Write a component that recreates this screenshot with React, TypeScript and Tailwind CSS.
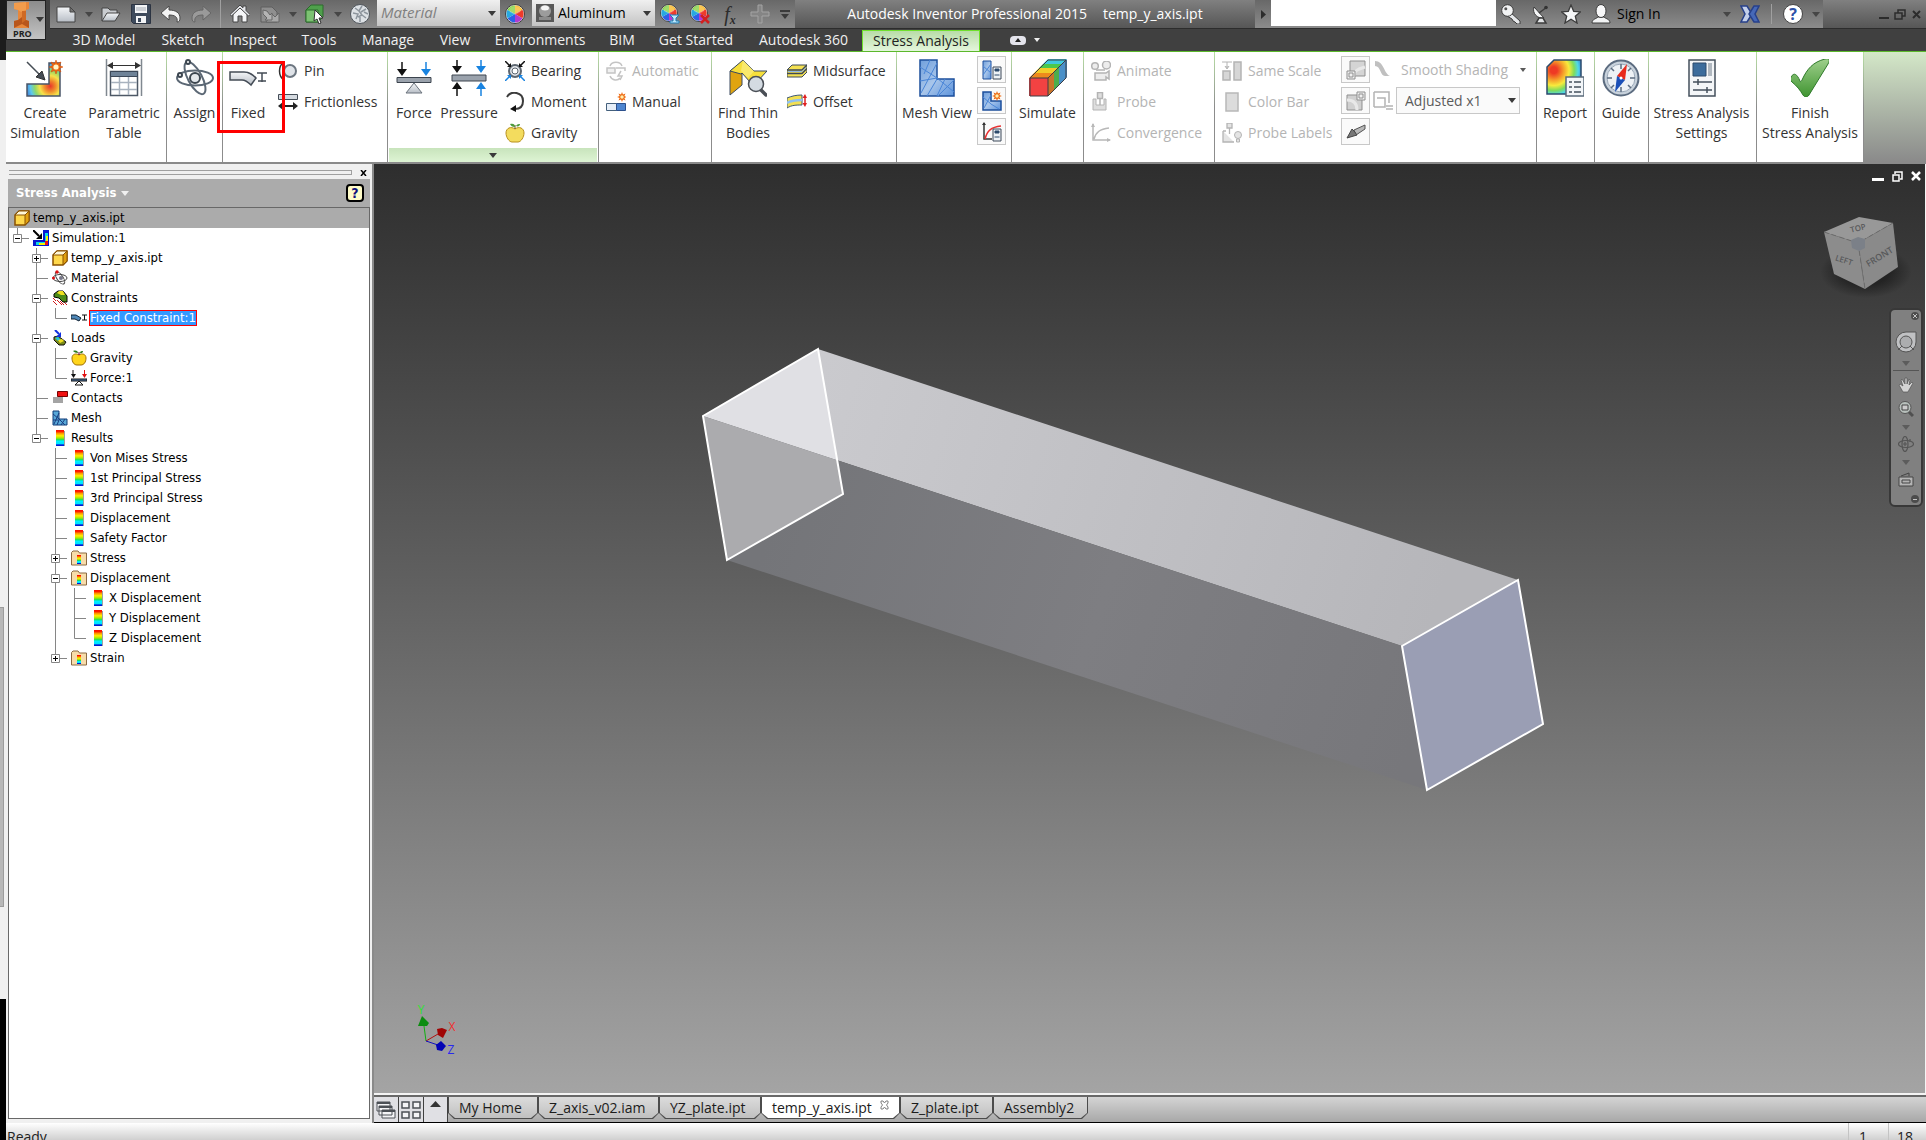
import type { ReactNode } from "react";

type IconProps = { children: ReactNode; size?: "sm" | "lg" | "xs" };

function Icon({ children, size = "sm" }: IconProps) {
  if (size === "lg") {
    return (
      <svg viewBox="0 0 38 38" className="size-[38px] shrink-0" fill="none">
        {children}
      </svg>
    );
  }
  if (size === "xs") {
    return (
      <svg viewBox="0 0 16 16" className="size-4 shrink-0" fill="none">
        {children}
      </svg>
    );
  }
  return (
    <svg viewBox="0 0 20 20" className="size-5 shrink-0" fill="none">
      {children}
    </svg>
  );
}

function Defs() {
  return (
    <svg className="absolute size-0" aria-hidden="true">
      <defs>
        <radialGradient id="heat" cx="0.7" cy="0.7" r="0.75">
          <stop offset="0" stopColor="#e8352a" />
          <stop offset="0.22" stopColor="#f08a2c" />
          <stop offset="0.42" stopColor="#f7e14a" />
          <stop offset="0.62" stopColor="#8fd86a" />
          <stop offset="0.8" stopColor="#5cc8ee" />
          <stop offset="1" stopColor="#3f78d8" />
        </radialGradient>
        <radialGradient id="heat2" cx="0.2" cy="0.3" r="1">
          <stop offset="0.1" stopColor="#ee3a24" />
          <stop offset="0.28" stopColor="#f59a2a" />
          <stop offset="0.45" stopColor="#f8ea3c" />
          <stop offset="0.6" stopColor="#7fdc5c" />
          <stop offset="0.72" stopColor="#4fd8e8" />
          <stop offset="0.9" stopColor="#2b5fd0" />
        </radialGradient>
        <linearGradient id="rainbow" x1="0" y1="0" x2="0" y2="1">
          <stop offset="0.08" stopColor="#ff1000" />
          <stop offset="0.22" stopColor="#ff9a00" />
          <stop offset="0.36" stopColor="#fff000" />
          <stop offset="0.5" stopColor="#a8e800" />
          <stop offset="0.62" stopColor="#10e060" />
          <stop offset="0.68" stopColor="#00f0ff" />
          <stop offset="0.88" stopColor="#00e0ff" />
          <stop offset="0.92" stopColor="#0018d8" />
        </linearGradient>
        <linearGradient id="steel" x1="0" y1="0" x2="0" y2="1">
          <stop offset="0" stopColor="#f4f6f8" />
          <stop offset="1" stopColor="#b8bec6" />
        </linearGradient>
        <linearGradient id="blue" x1="0" y1="0" x2="1" y2="1">
          <stop offset="0" stopColor="#6f9fdc" />
          <stop offset="0.5" stopColor="#a9c6ea" />
          <stop offset="1" stopColor="#5c93dc" />
        </linearGradient>
        <linearGradient id="tick" x1="0" y1="0" x2="0" y2="1">
          <stop offset="0" stopColor="#9fd08c" />
          <stop offset="1" stopColor="#3f9430" />
        </linearGradient>
      </defs>
    </svg>
  );
}

const burst = "M0-7 1.4-3.4 5-5 3.4-1.4 7 0 3.4 1.4 5 5 1.4 3.4 0 7-1.4 3.4-5 5-3.4 1.4-7 0-3.4-1.4-5-5-1.4-3.4Z";

/* ---------- quick access icons ---------- */

const wheel = (
  <>
    <circle cx="10" cy="10" r="9.5" fill="#f5f5f5" stroke="#3c3c3c" />
    <path d="M10 10V1.500A8.500 8.500 0 0 1 17.400 5.800Z" fill="#f7b51e" />
    <path d="M10 10 17.400 5.800A8.500 8.500 0 0 1 17.400 14.200Z" fill="#ee3b2a" />
    <path d="M10 10 17.400 14.200A8.500 8.500 0 0 1 10 18.500Z" fill="#b23bd0" />
    <path d="M10 10V18.500A8.500 8.500 0 0 1 2.600 14.200Z" fill="#2c62e8" />
    <path d="M10 10 2.600 14.200A8.500 8.500 0 0 1 2.600 5.800Z" fill="#27a8e0" />
    <path d="M10 10 2.600 5.800A8.500 8.500 0 0 1 10 1.500Z" fill="#7ed03a" />
    <ellipse cx="10" cy="6" rx="6" ry="4" fill="#fff" opacity="0.25" />
  </>
);

const icons = {
  doc: <path d="M1 3h13l5 5v10H1Zm13 0v5h5" fill="url(#steel)" stroke="#444" />,
  open: (
    <>
      <path d="M1 17V4h6l2 2h7v3" fill="#c9ccd0" stroke="#444" />
      <path d="M1 17 6 9h13l-5 8Z" fill="url(#steel)" stroke="#444" />
    </>
  ),
  save: (
    <>
      <path d="M.5.500h19v19H2.500l-2-2Z" fill="#3d4a5c" stroke="#2c3442" />
      <path d="M4 1h12v8H4ZM5 12h10v7H5Z" fill="#f2f4f6" />
      <path d="M5 4h10M5 6h10" stroke="#a5acb5" />
      <path d="M7 14h3v4H7Z" fill="#3d4a5c" />
    </>
  ),
  undo: <path d="M0 9 8 2v4c7 0 11 3 11 8 0 3-1 4-3 4 1-5-2-7-8-7v5Z" fill="#f4f4f4" stroke="#4a4a4a" />,
  redo: <path d="M20 9 12 2v4C5 6 1 9 1 14c0 3 1 4 3 4-1-5 2-7 8-7v5Z" fill="#9a9a9a" stroke="#666" />,
  home: (
    <>
      <path d="M3 10v8h5v-6h4v6h5v-8l-7-7Z" fill="#f4f5f7" stroke="#444" />
      <path d="M0 10.500 10 1l3 2.800V2h3v4.500l4 4-1.500 1.500L10 4 1.500 12Z" fill="#e4e6ea" stroke="#444" />
    </>
  ),
  update: (
    <>
      <path d="M1 3h11l5 5v10H1Z" fill="#8f8f8f" stroke="#5f5f5f" />
      <path d="M19 18H6l6-8 3 3 4-4Z" fill="#a8a8a8" stroke="#666" />
      <path d="m3 6 4 1 3 4 2-2v7H5l2-2-4-4Z" fill="#b4b4b4" stroke="#666" />
    </>
  ),
  select: (
    <>
      <path d="M1 6 6 1h12v12l-5 5H1Z" fill="#4fa04c" stroke="#2c6a2c" />
      <path d="M1 6h12v12H1Z" fill="#7cc272" stroke="#2c6a2c" />
      <path d="m10 6 8 8h-4l2 5-2 1-2-5-3 2Z" fill="#fff" stroke="#333" />
    </>
  ),
  ball: (
    <>
      <circle cx="10" cy="10" r="9.500" fill="#dde1e5" stroke="#50565c" />
      <path d="m5 4 4 3 3-5M3 9l5 1-2 5M11 8l5-3M12 11l4 3M10 13v5M9 7l3 4-4 2M14 8l4 2" stroke="#8d959d" strokeWidth="1.500" />
    </>
  ),
  wheel,
  adjust: (
    <>
      <g transform="scale(.9)">{wheel}</g>
      <path d="M10 11h9l-3 3v3h3v2h-9v-2h3v-3Z" fill="#bfe8fb" stroke="#1c7fb8" />
    </>
  ),
  clear: (
    <>
      <g transform="scale(.9)">{wheel}</g>
      <path d="m11 11 8 8m0-8-8 8" stroke="#d22020" strokeWidth="2.500" />
    </>
  ),
  plus: <path d="M8 1h4v7h7v4h-7v7H8v-7H1V8h7Z" fill="#858585" stroke="#a4a4a4" />,
  key: (
    <>
      <path d="m9 8 10 9v3h-3l-2-2-2-1-1-2-5-3Z" fill="#e6e8ea" stroke="#3c3c3c" />
      <circle cx="6.500" cy="6.500" r="5.800" fill="#f2f3f4" stroke="#3c3c3c" />
      <circle cx="4.800" cy="4.800" r="1.500" fill="#555" />
    </>
  ),
  dish: (
    <>
      <path d="M3 3c-2 6 3 12 10 11Z" fill="#f4f5f6" stroke="#3c3c3c" />
      <path d="m8 9 8-6M5 19h10l-3-5H8Z" fill="#e2e4e6" stroke="#3c3c3c" strokeWidth="1.500" />
      <circle cx="15" cy="3.500" r="1.800" fill="#333" />
    </>
  ),
  star: <path d="m10 1 2.700 6.300 6.800.5-5.200 4.400 1.700 6.800-6-3.700L4 19l1.700-6.800L.5 7.800l6.800-.5Z" fill="#f6f7f8" stroke="#3c3c3c" strokeWidth="1.300" />,
  user: (
    <>
      <path d="M1 19c0-4 4-4 6-6h6c2 2 6 2 6 6Z" fill="#f2f3f4" stroke="#3c3c3c" />
      <ellipse cx="10" cy="7" rx="5" ry="6.500" fill="#f8f8f9" stroke="#3c3c3c" />
    </>
  ),
  exchange: (
    <>
      <path d="M1 2h6l5 8-5 8H1l4-8Z" fill="#c4d0ea" stroke="#27408a" strokeWidth="1.500" />
      <path d="M19 2h-5l-5 8 5 8h5l-4-8Z" fill="#4668b8" stroke="#27408a" strokeWidth="1.500" />
    </>
  ),
};

const big = {
  createSim: (
    <>
      <path d="M1 25h22V4h11v33H1Z" fill="url(#heat)" stroke="#4a5668" strokeWidth="1.500" />
      <path d="M1 3 16 18" stroke="#454c54" strokeWidth="1.500" />
      <path d="M19 21 10 18l6-6Z" fill="#454c54" stroke="#333" />
      <g transform="translate(30 8)">
        <path d={burst} fill="#ee6b12" stroke="#d04808" strokeWidth=".5" />
        <circle r="2.600" fill="#fff6c8" />
      </g>
    </>
  ),
  table: (
    <>
      <path d="M1.500 0v37M36.500 0v37" stroke="#808890" strokeWidth="1.500" />
      <path d="M3 6.500h32" stroke="#333" />
      <path d="M2 6.500 8 3v7ZM36 6.500 30 3v7Z" fill="#333" />
      <path d="M5.500 12.500h27v24h-27Z" fill="#fff" stroke="#4d5866" strokeWidth="1.500" />
      <path d="M5.500 12.500h27v5h-27Z" fill="#6f8398" stroke="#3c4858" />
      <path d="M6 23.500h26M6 30.500h26M14.500 18v18M23.500 18v18" stroke="#a8b2be" strokeWidth="1.500" />
    </>
  ),
  assign: (
    <g stroke="#5c6875" strokeWidth="2">
      <ellipse cx="19" cy="19" rx="18" ry="7.500" />
      <ellipse cx="19" cy="19" rx="18" ry="7" transform="rotate(62 19 19)" />
      <circle cx="19" cy="19" r="5" fill="#e4e8ec" stroke="#3c4650" />
      <circle cx="12" cy="3" r="2" fill="#fff" stroke="#3c4650" />
      <circle cx="4" cy="16" r="2" fill="#fff" stroke="#3c4650" />
    </g>
  ),
  fixed: (
    <>
      <path d="M1 13h14c6 0 9 3 12 6l-5 7c-3-3-5-5-9-5H1Z" fill="url(#steel)" stroke="#444c56" strokeWidth="1.500" />
      <path d="M28 14h10M33 14v9M29 22h8" stroke="#444c56" strokeWidth="1.500" />
    </>
  ),
  force: (
    <>
      <path d="M2 18.500h34v5H2Z" fill="#9aa2ac" stroke="#3c444e" />
      <path d="m19 24 8 10H11Z" fill="url(#steel)" stroke="#6a727c" />
      <path d="M7 3v10" stroke="#111" strokeWidth="1.500" />
      <path d="M2 10h10l-5 7Z" fill="#111" />
      <path d="M31 3v10" stroke="#1883e0" strokeWidth="1.500" />
      <path d="M26 10h10l-5 7Z" fill="#1883e0" />
    </>
  ),
  pressure: (
    <>
      <path d="M2 16h34v6H2Z" fill="#9aa2ac" stroke="#3c444e" />
      <path d="M7 1v8M7 29v8" stroke="#111" strokeWidth="1.500" />
      <path d="M2 7h10l-5 7ZM2 30h10l-5-7Z" fill="#111" />
      <path d="M31 1v8M31 29v8" stroke="#1883e0" strokeWidth="1.500" />
      <path d="M26 7h10l-5 7ZM26 30h10l-5-7Z" fill="#1883e0" />
    </>
  ),
  thin: (
    <>
      <path d="M1 12 13 3v23L1 36Z" fill="#e0a410" stroke="#3a4a60" />
      <path d="M1 12 14 1l11 11h13L27 24l-6-1-8-9-1 1Z" fill="#f6df3c" stroke="#3a4a60" />
      <path d="m14 1 11 11-6 7-7-7Z" fill="#fbf08c" opacity=".6" />
      <path d="m31 30 6 6" stroke="#4a4f56" strokeWidth="3.500" strokeLinecap="round" />
      <circle cx="27" cy="25" r="7.500" fill="#d4dbe2" stroke="#4a4f56" strokeWidth="1.500" />
    </>
  ),
  mesh: (
    <>
      <path d="M2 1h17v19h17v17H2Z" fill="url(#blue)" stroke="#1c4f9c" strokeWidth="1.500" />
      <path d="m2 8 17 11M19 4 3 34M2 22l17-3 17 14M19 20 9 37M19 37l8-17M36 21 20 37M12 1l-6 14" stroke="#4a86d8" />
    </>
  ),
  simulate: (
    <>
      <path d="M0 19 5 14h19l-5 5Z" fill="#ee8a1c" />
      <path d="M5 14 10 9h19l-5 5Z" fill="#f2cc28" />
      <path d="M10 9 14 5h19l-4 4Z" fill="#4cc84c" />
      <path d="M14 5 19 0h19l-5 5Z" fill="#40c8e0" />
      <path d="M0 19h19v18H0Z" fill="#f24242" />
      <path d="m19 19 6-6v18l-6 6Z" fill="#c8742a" />
      <path d="m25 13 5-5v18l-5 5Z" fill="#4cae4c" />
      <path d="m30 8 8-8v18l-8 8Z" fill="#4a90c8" />
      <path d="M1 19 19 1h18v18L19 37H1ZM1 19h18v18M19 19 37 1" stroke="#3c3c44" />
    </>
  ),
  report: (
    <>
      <path d="M1 8 8 1h27v34H1Z" fill="url(#heat2)" stroke="#2c4a6c" strokeWidth="1.500" />
      <path d="M20 18h18v19H20Z" fill="#f2f5f8" stroke="#5a6a7a" strokeWidth="1.500" />
      <path d="M23 23h3M23 28h3M23 33h3M28 23h7M28 28h7M28 33h7" stroke="#44505c" strokeWidth="1.500" />
    </>
  ),
  guide: (
    <>
      <circle cx="19" cy="19" r="17.500" fill="#c8d2dc" stroke="#5c6c80" strokeWidth="2" />
      <circle cx="19" cy="19" r="14" fill="#eef2f6" stroke="#9aa8b8" />
      <path d="M19 5v5M19 28v5M5 19h5M28 19h5M9 9l3 3M26 26l3 3M9 29l3-3M26 12l3-3" stroke="#5c6c80" strokeWidth="1.500" />
      <path d="m25 5-2 16-8-4Z" fill="#e82a1c" />
      <path d="m13 33 2-16 8 4Z" fill="#1c50b8" />
      <circle cx="19" cy="19" r="1.500" fill="#fff" />
    </>
  ),
  settings: (
    <>
      <path d="M6 1h26v36H6Z" fill="#f4f6f8" stroke="#44505c" strokeWidth="1.500" />
      <path d="M10 4h13v13H10Z" fill="#3c6c9c" stroke="#2c4a6c" />
      <path d="M25 4h4v13h-4Z" fill="#b0b8c0" />
      <path d="M10 23h19M10 31h19M15 20v6M24 28v6" stroke="#44505c" strokeWidth="1.500" />
    </>
  ),
  finish: <path d="M0 18c3-5 6-3 9 4 0 1 1 1 2-1C16 10 22 3 34 0c5-1 5 1 3 5L18 36c-2 3-4 3-6 0C9 31 6 27 1 23c-2-2-2-3-1-5Z" fill="url(#tick)" stroke="#2f7a2a" />,
};

const small = {
  pin: (
    <>
      <path d="M6 1C0 5 0 15 6 19" stroke="#333" strokeWidth="1.500" />
      <path d="M2 0h4v4" stroke="#333" strokeWidth="2" />
      <circle cx="12" cy="10" r="6" fill="#dfe3e8" stroke="#6c7680" strokeWidth="2" />
    </>
  ),
  frictionless: (
    <>
      <path d="M.5 2.500h19v5H.5Z" fill="#d5dae0" stroke="#444c56" />
      <path d="M4 14h12" stroke="#222" strokeWidth="2" />
      <path d="m0 14 5-4v8ZM20 14l-5-4v8Z" fill="#222" />
    </>
  ),
  bearing: (
    <>
      <circle cx="10" cy="10" r="6" fill="#dfe3e8" stroke="#5c6670" strokeWidth="2" />
      <circle cx="10" cy="10" r="3" fill="#fff" stroke="#5c6670" />
      <path d="m0 0 5 5M20 0l-5 5" stroke="#111" strokeWidth="1.500" />
      <path d="M6 6H2l4-4ZM14 6h4l-4-4Z" fill="#111" />
      <path d="m0 20 5-5M20 20l-5-5" stroke="#1883e0" strokeWidth="1.500" />
      <path d="M6 14H2l4 4ZM14 14h4l-4 4Z" fill="#1883e0" />
    </>
  ),
  moment: (
    <>
      <path d="M2 5C6-2 18 0 18 9c0 5-3 8-8 8" stroke="#3c3c3c" strokeWidth="2" />
      <path d="m5 17 6-4v7Z" fill="#111" />
    </>
  ),
  apple: (
    <>
      <path d="M10 6c4-3 9-1 9 4 0 4-3 9-6 9-2 0-4 0-6 0-3 0-6-5-6-9 0-5 5-7 9-4Z" fill="#f3dc5e" stroke="#b8901c" />
      <path d="M10 6V2" stroke="#6a5020" />
      <path d="M10 4c-3 0-4-1-5-3 3-1 5 0 5 3ZM11 3c1-2 3-2 4-2 0 2-2 3-4 2Z" fill="#4e9a3c" />
    </>
  ),
  auto: (
    <g stroke="#c4c4c4" strokeWidth="1.500">
      <path d="M4 5c2-5 10-5 12 0M4 15c2 5 8 5 10 2" />
      <path d="M1 7h8v5H1Z" fill="#f0f0f0" />
      <path d="M10 7h9v3M15 10l-3 5h4l-2 4" />
    </g>
  ),
  manual: (
    <>
      <path d="M.5 11.500h10v7H.5Z" fill="#e6eef8" stroke="#44607c" />
      <path d="M10.500 11.500h9v7h-9Z" fill="#4f86d0" stroke="#2c508c" />
      <g transform="translate(16 5) scale(.7)">
        <path d={burst} fill="#ee6b12" />
        <circle r="2.500" fill="#fff0b0" />
      </g>
    </>
  ),
  midsurface: (
    <>
      <path d="M0 9 5 4h15v7l-5 5H0Z" fill="#f3e052" stroke="#3c4858" />
      <path d="M0 9h15l5-5M0 12.500h15l5-5" stroke="#3c4858" strokeWidth="1.500" />
      <path d="M1 10.500h14l4-4" stroke="#8fb8e8" />
    </>
  ),
  offset: (
    <>
      <path d="M0 6c5-2 9-3 15-3v10c-6 0-10 0-15 3Z" fill="#f3e052" stroke="#3c5878" />
      <path d="M0 11c5-3 9-3 15-3" stroke="#8fc0f0" strokeWidth="2.500" />
      <path d="M18 4v9" stroke="#e02020" strokeWidth="1.500" />
      <path d="m15.500 6 2.500-4 2 4ZM15.500 11l2.500 4 2-4Z" fill="#e02020" />
    </>
  ),
  meshSettings: (
    <>
      <path d="M1 1h8v18H1Z" fill="url(#blue)" stroke="#1c4f9c" />
      <path d="m1 6 8 7M9 4 1 15" stroke="#4a86d8" />
      <path d="M11 7h8v12h-8Z" fill="#eef2f6" stroke="#3c4858" />
      <path d="M13 9h4v2h-4ZM12.500 15h5" fill="#2c4a6c" stroke="#2c4a6c" />
    </>
  ),
  meshLocal: (
    <>
      <path d="M1 1h8v9h10v9H1Z" fill="url(#blue)" stroke="#1c4f9c" strokeWidth="1.500" />
      <path d="m1 6 8 7 8 5M9 4 2 17" stroke="#4a86d8" />
      <g transform="translate(15 5) scale(.7)">
        <path d={burst} fill="#ee6b12" />
        <circle r="2.500" fill="#fff0b0" />
      </g>
    </>
  ),
  convSettings: (
    <>
      <path d="M2 1v16h8" stroke="#333" strokeWidth="1.500" />
      <path d="m0 3 2-3 2 3Z" fill="#333" />
      <path d="M3 17C5 9 9 5 19 4" stroke="#e83030" strokeWidth="1.500" />
      <path d="M11 7h8v12h-8Z" fill="#eef2f6" stroke="#3c4858" />
      <path d="M13 9h4v2h-4ZM12.500 15h5" fill="#2c4a6c" stroke="#2c4a6c" />
    </>
  ),
  animate: (
    <g stroke="#b4b4b4" strokeWidth="1.500" fill="#ededed">
      <circle cx="4" cy="5" r="3.300" />
      <circle cx="15.500" cy="4" r="4" />
      <path d="M5 9h9M4 12h11l3-2v8l-3-2v3H4Z" />
    </g>
  ),
  probe: (
    <g stroke="#b4b4b4" fill="#dedede">
      <path d="M2 7h3v6h8V7h2v11H2Z" />
      <path d="M6.500.500h5v6h-5ZM9 7v6" strokeWidth="1.500" />
    </g>
  ),
  convergence: (
    <>
      <path d="M2 1v16h17M3 16C5 9 9 6 18 5" stroke="#b8b8b8" strokeWidth="1.500" />
      <path d="m0 4 2-4 2 4ZM16 15l4 2-4 2Z" fill="#b8b8b8" />
    </>
  ),
  sameScale: (
    <g stroke="#b4b4b4" fill="#d6d6d6">
      <path d="M0 1h10M5 1v6M3 5l2 3 2-3" />
      <path d="M1 10h7v9H1ZM12 1h7v18h-7Z" strokeWidth="1.500" />
    </g>
  ),
  colorBar: <path d="M4 1h12v18H4Z" fill="#dcdcdc" stroke="#b8b8b8" strokeWidth="1.500" />,
  probeLabels: (
    <g stroke="#b4b4b4" fill="#e4e4e4">
      <path d="M5 0h5v5H5ZM7.500 5v6M1 8h3M1 8v11h11" strokeWidth="1.300" />
      <circle cx="16" cy="12" r="3.500" />
      <path d="M14.500 16h3v3h-3Z" />
    </g>
  ),
  maxValue: (
    <g stroke="#8f8f8f">
      <path d="M4 1h15v15H4Z" fill="#d4d4d4" />
      <path d="M8 16c0-6 5-7 11-9" stroke="#e8e8e8" strokeWidth="3" />
      <path d="M1 11h8v8H1ZM3 13h4v4H3Z" fill="#f0f0f0" />
    </g>
  ),
  minValue: (
    <g stroke="#8f8f8f">
      <path d="M1 4h15v15H1Z" fill="#d0d0d0" />
      <path d="M1 9c7 0 10 4 10 10" stroke="#e8e8e8" strokeWidth="3" />
      <path d="M11 1h8v8h-8ZM13 3h4v4h-4Z" fill="#f0f0f0" />
    </g>
  ),
  boundary: (
    <>
      <path d="m8 8 11-5v4l-9 6Z" fill="#b8b8b8" stroke="#555" />
      <path d="M1 16 6 7l2 2 3 4Z" fill="#777" stroke="#444" />
    </>
  ),
  shading: <path d="M2 1c9 0 9 13 15 15h-5C7 16 8 6 2 6Z" fill="#c0c0c0" />,
  scale: (
    <g stroke="#b4b4b4" strokeWidth="1.500">
      <path d="M1 1h15v11M1 1v15M4 7h8v9H1" />
      <path d="M13 15h7M13 18h7" />
    </g>
  ),
};

/* ---------- ribbon ---------- */

function Caret({ light = false }: { light?: boolean }) {
  return (
    <svg viewBox="0 0 8 5" className="h-[5px] w-2 shrink-0">
      <path d="M0 0h8L4 5Z" fill={light ? "#f0f0f0" : "#3a3a3a"} />
    </svg>
  );
}

function QuickButton({ label, children }: { label: string; children: ReactNode }) {
  return (
    <button aria-label={label} className="flex h-full w-[30px] shrink-0 items-center justify-center">
      <Icon>{children}</Icon>
    </button>
  );
}

function CaretButton({ label }: { label: string }) {
  return (
    <button aria-label={label} className="flex h-full w-[15px] shrink-0 items-center justify-center opacity-80">
      <Caret />
    </button>
  );
}

function BigButton({ label, icon, width }: { label: string[]; icon: ReactNode; width: string }) {
  return (
    <button className={`flex shrink-0 flex-col items-center pt-[7px] ${width}`}>
      <Icon size="lg">{icon}</Icon>
      <span className="mt-1.5 flex flex-col text-center whitespace-nowrap">
        {label.map((line) => (
          <span key={line}>{line}</span>
        ))}
      </span>
    </button>
  );
}

function SmallButton({ label, icon, disabled }: { label: string; icon: ReactNode; disabled?: boolean }) {
  return (
    <button disabled={disabled} className="flex h-[31px] items-center gap-1.5 whitespace-nowrap disabled:text-[#b4b4b4]">
      <Icon>{icon}</Icon>
      {label}
    </button>
  );
}

function SquareButton({ label, icon }: { label: string; icon: ReactNode }) {
  return (
    <button aria-label={label} className="flex h-[27px] w-[29px] shrink-0 items-center justify-center border border-[#c8c8c8] bg-[#fafafa]">
      <Icon>{icon}</Icon>
    </button>
  );
}

function Panel({ width, children }: { width: string; children: ReactNode }) {
  return (
    <div className={`flex shrink-0 bg-white ${width}`}>
      <div className="relative flex min-w-0 flex-1">{children}</div>
      <span className="w-px bg-linear-to-b from-[#b8e0a4] to-[#8c8c8c] to-50%" />
    </div>
  );
}

const tabs = [
  { label: "3D Model", width: "w-[90px]" },
  { label: "Sketch", width: "w-[68px]" },
  { label: "Inspect", width: "w-[72px]" },
  { label: "Tools", width: "w-[60px]" },
  { label: "Manage", width: "w-[78px]" },
  { label: "View", width: "w-14" },
  { label: "Environments", width: "w-[114px]" },
  { label: "BIM", width: "w-[50px]" },
  { label: "Get Started", width: "w-[98px]" },
  { label: "Autodesk 360", width: "w-[117px]" },
];

function TitleBar() {
  return (
    <div className="flex h-7 items-stretch bg-linear-to-b from-[#686868] to-[#8c8c8c] text-sm">
      <div className="flex items-center pl-px">
        <QuickButton label="New">{icons.doc}</QuickButton>
        <CaretButton label="New options" />
        <QuickButton label="Open">{icons.open}</QuickButton>
        <QuickButton label="Save">{icons.save}</QuickButton>
        <QuickButton label="Undo">{icons.undo}</QuickButton>
        <QuickButton label="Redo">{icons.redo}</QuickButton>
        <span className="mx-1 h-full w-px bg-[#a0a0a0]" />
        <QuickButton label="Home">{icons.home}</QuickButton>
        <QuickButton label="Update">{icons.update}</QuickButton>
        <CaretButton label="Update options" />
        <QuickButton label="Select">{icons.select}</QuickButton>
        <CaretButton label="Select options" />
        <QuickButton label="Material browser">{icons.ball}</QuickButton>
        <label className="ml-0.5 flex h-[26px] w-[123px] items-center self-start bg-linear-to-b from-[#f0f0f0] to-[#c4c4c4] pr-1 pl-1">
          <select aria-label="Material" className="min-w-0 flex-1 appearance-none text-[15px] text-[#808080] italic">
            <option>Material</option>
          </select>
          <Caret />
        </label>
        <QuickButton label="Appearance browser">{icons.wheel}</QuickButton>
        <label className="ml-0.5 flex h-[26px] w-[123px] items-center gap-1 self-start bg-linear-to-b from-[#f0f0f0] to-[#c4c4c4] pr-1 pl-1">
          <svg viewBox="0 0 18 18" className="size-[18px] shrink-0">
            <path d="M0 0h18v18H0Z" fill="#585858" />
            <circle cx="9" cy="7" r="6" fill="#9c9c9c" />
            <ellipse cx="9" cy="4" rx="4" ry="2.500" fill="#f4f4f4" />
            <path d="M3 13h12v3H3Z" fill="#8c8c8c" />
          </svg>
          <select aria-label="Appearance" className="min-w-0 flex-1 appearance-none text-sm text-black">
            <option>Aluminum</option>
          </select>
          <Caret />
        </label>
        <QuickButton label="Adjust appearance">{icons.adjust}</QuickButton>
        <QuickButton label="Clear appearance">{icons.clear}</QuickButton>
        <button aria-label="Parameters" className="w-[30px] shrink-0 font-['Liberation_Serif',serif] text-xl leading-6 text-[#2c2c2c] italic">
          f<sub className="text-xs font-bold">x</sub>
        </button>
        <QuickButton label="Add">{icons.plus}</QuickButton>
        <button aria-label="Customize" className="flex w-5 flex-col items-center gap-0.5">
          <span className="h-0.5 w-2.5 bg-[#3a3a3a]" />
          <Caret />
        </button>
      </div>
      <h1 className="flex min-w-0 flex-1 items-center justify-center gap-4 bg-linear-to-b from-[#808080] to-[#565656] whitespace-nowrap text-white">
        <span>Autodesk Inventor Professional 2015</span>
        <span>temp_y_axis.ipt</span>
      </h1>
      <div className="flex items-center">
        <button aria-label="Collapse search" className="flex w-4 items-center justify-center">
          <svg viewBox="0 0 5 9" className="h-[9px] w-[5px]">
            <path d="M0 0v9l5-4.500Z" fill="#2c2c2c" />
          </svg>
        </button>
        <input aria-label="Search" className="h-[26px] w-[225px] self-start bg-white px-1" />
        <QuickButton label="Subscription">{icons.key}</QuickButton>
        <QuickButton label="Communication">{icons.dish}</QuickButton>
        <QuickButton label="Favorites">{icons.star}</QuickButton>
        <button className="flex w-[133px] items-center gap-1.5 pl-[5px] text-black">
          <Icon>{icons.user}</Icon>
          Sign In
        </button>
        <span className="flex w-4 items-center">
          <CaretButton label="Account" />
        </span>
        <QuickButton label="Exchange">{icons.exchange}</QuickButton>
        <span className="mx-1.5 h-5 w-px bg-[#a0a0a0]" />
        <button aria-label="Help" className="flex w-[30px] justify-center">
          <span className="flex size-5 items-center justify-center rounded-full border border-[#444] bg-white text-base leading-4 font-bold text-[#2c50a8]">?</span>
        </button>
        <CaretButton label="Help options" />
      </div>
      <div className="flex w-[103px] items-center justify-end bg-linear-to-b from-[#808080] to-[#565656] pr-0.5">
        <button aria-label="Minimize" className="flex w-4 justify-center pt-2">
          <span className="h-0.5 w-2.5 bg-[#2c2c2c]" />
        </button>
        <button aria-label="Restore" className="flex w-4 justify-center">
          <svg viewBox="0 0 12 11" className="h-[11px] w-3">
            <path d="M1 4h7v6H1ZM4 4V1h7v6H8" fill="none" stroke="#2c2c2c" strokeWidth="1.500" />
          </svg>
        </button>
        <button aria-label="Close" className="flex w-4 justify-center">
          <svg viewBox="0 0 9 9" className="size-[9px]">
            <path d="m1 1 7 7m0-7L1 8" stroke="#2c2c2c" strokeWidth="2" />
          </svg>
        </button>
      </div>
    </div>
  );
}

function Header() {
  return (
    <header className="flex h-[52px] shrink-0 border-b border-[#5cb82c] bg-[#404040]">
      <div className="flex w-11 shrink-0 flex-col">
        <button aria-label="Application menu" className="flex h-10 w-10 items-start gap-1 border border-[#222] bg-linear-to-b from-[#8c8c8c] to-[#c4c4c4] pl-1.5">
          <span className="flex flex-col items-center">
            <svg viewBox="0 0 18 28" className="h-7 w-[18px]">
              <path d="M1 2 16 1v7l-3 1v10l3 1v7H1v-7l4-1V9L1 8Z" fill="#e8873a" />
              <path d="M1 2v6l4 1 3 2 5-2V1Z" fill="#f29c4c" />
              <path d="m5 19 4-3 4 3 3 1v7l-7-4-8 4v-7Z" fill="#b8561c" />
              <path d="M9 10h4v9l-4 3Z" fill="#cf6a24" />
            </svg>
            <span className="text-[9px] leading-[10px] font-bold text-[#222]">PRO</span>
          </span>
          <span className="pt-4">
            <Caret />
          </span>
        </button>
      </div>
      <div className="flex min-w-0 flex-1 flex-col">
        <TitleBar />
        <nav className="flex flex-1 items-stretch border-t border-[#2c2c2c] pl-[9px] text-sm text-[#f0f0f0]">
          {tabs.map((tab) => (
            <button key={tab.label} className={`shrink-0 text-center whitespace-nowrap ${tab.width}`}>
              {tab.label}
            </button>
          ))}
          <button className="mt-px w-[118px] shrink-0 border border-b-0 border-[#6fe02c] bg-linear-to-b from-[#b8dca8] to-[#e4f6dc] text-[#222]">
            Stress Analysis
          </button>
          <button aria-label="Minimize ribbon" className="ml-[30px] flex items-center gap-2">
            <span className="flex h-[9px] w-4 items-center justify-center rounded-sm bg-[#e4e4ec]">
              <svg viewBox="0 0 6 4" className="h-1 w-1.5">
                <path d="M0 4h6L3 0Z" fill="#222" />
              </svg>
            </span>
            <svg viewBox="0 0 6 4" className="h-1 w-1.5">
              <path d="M0 0h6L3 4Z" fill="#f0f0f0" />
            </svg>
          </button>
        </nav>
      </div>
    </header>
  );
}

function Ribbon() {
  return (
    <section className="flex h-28 shrink-0 overflow-hidden border-b-2 border-[#8a8a8a] bg-linear-to-b from-[#d4e8c8] to-[#8a8a8a] text-sm leading-5 text-[#333]">
      <Panel width="w-[161px]">
        <BigButton width="w-[78px]" label={["Create", "Simulation"]} icon={big.createSim} />
        <BigButton width="w-20" label={["Parametric", "Table"]} icon={big.table} />
      </Panel>
      <Panel width="w-14">
        <BigButton width="w-full" label={["Assign"]} icon={big.assign} />
      </Panel>
      <Panel width="w-[165px]">
        <BigButton width="w-[50px]" label={["Fixed"]} icon={big.fixed} />
        <div className="flex flex-col pt-[3px] pl-[5px]">
          <SmallButton label="Pin" icon={small.pin} />
          <SmallButton label="Frictionless" icon={small.frictionless} />
        </div>
        <span className="pointer-events-none absolute top-[9px] -left-1.5 h-[72px] w-[68px] border-[3px] border-[#ff0000]" />
      </Panel>
      <Panel width="w-[211px]">
        <div className="flex flex-1 flex-col">
          <div className="flex h-24">
            <BigButton width="w-[52px]" label={["Force"]} icon={big.force} />
            <BigButton width="w-[58px]" label={["Pressure"]} icon={big.pressure} />
            <div className="flex flex-col pt-[3px] pl-[7px]">
              <SmallButton label="Bearing" icon={small.bearing} />
              <SmallButton label="Moment" icon={small.moment} />
              <SmallButton label="Gravity" icon={small.apple} />
            </div>
          </div>
          <button aria-label="More loads" className="mx-px flex flex-1 items-center justify-center bg-linear-to-b from-[#c8e4bc] to-[#def4d4]">
            <Caret />
          </button>
        </div>
      </Panel>
      <Panel width="w-[113px]">
        <div className="flex flex-col pt-[3px] pl-[7px]">
          <SmallButton label="Automatic" icon={small.auto} disabled />
          <SmallButton label="Manual" icon={small.manual} />
        </div>
      </Panel>
      <Panel width="w-[185px]">
        <BigButton width="w-[72px]" label={["Find Thin", "Bodies"]} icon={big.thin} />
        <div className="flex flex-col pt-[3px] pl-[3px]">
          <SmallButton label="Midsurface" icon={small.midsurface} />
          <SmallButton label="Offset" icon={small.offset} />
        </div>
      </Panel>
      <Panel width="w-[115px]">
        <BigButton width="w-20" label={["Mesh View"]} icon={big.mesh} />
        <div className="flex flex-col gap-1 pt-1">
          <SquareButton label="Mesh settings" icon={small.meshSettings} />
          <SquareButton label="Local mesh control" icon={small.meshLocal} />
          <SquareButton label="Convergence settings" icon={small.convSettings} />
        </div>
      </Panel>
      <Panel width="w-[72px]">
        <BigButton width="w-full" label={["Simulate"]} icon={big.simulate} />
      </Panel>
      <Panel width="w-[131px]">
        <div className="flex flex-col pt-[3px] pl-[7px]">
          <SmallButton label="Animate" icon={small.animate} disabled />
          <SmallButton label="Probe" icon={small.probe} disabled />
          <SmallButton label="Convergence" icon={small.convergence} disabled />
        </div>
      </Panel>
      <Panel width="w-[322px]">
        <div className="flex w-[126px] flex-col pt-[3px] pl-[7px]">
          <SmallButton label="Same Scale" icon={small.sameScale} disabled />
          <SmallButton label="Color Bar" icon={small.colorBar} disabled />
          <SmallButton label="Probe Labels" icon={small.probeLabels} disabled />
        </div>
        <div className="flex flex-col gap-1 pt-1">
          <div className="flex h-[27px] items-center gap-[3px]">
            <SquareButton label="Maximum value" icon={small.maxValue} />
            <button disabled className="flex items-center gap-2 whitespace-nowrap text-[#b4b4b4]">
              <Icon>{small.shading}</Icon>
              Smooth Shading
            </button>
            <button aria-label="Shading options" className="ml-1.5 flex w-3 justify-center">
              <svg viewBox="0 0 6 4" className="h-1 w-1.5">
                <path d="M0 0h6L3 4Z" fill="#5a5a5a" />
              </svg>
            </button>
          </div>
          <div className="flex h-[27px] items-center gap-[3px]">
            <SquareButton label="Minimum value" icon={small.minValue} />
            <Icon>{small.scale}</Icon>
            <label className="flex h-full w-[124px] items-center border border-[#c8c8c8] bg-[#fafafa] pr-[3px] pl-2">
              <select aria-label="Displacement scale" className="min-w-0 flex-1 appearance-none text-[#5a5a5a]">
                <option>Adjusted x1</option>
              </select>
              <Caret />
            </label>
          </div>
          <SquareButton label="Boundary condition" icon={small.boundary} />
        </div>
      </Panel>
      <Panel width="w-[58px]">
        <BigButton width="w-14" label={["Report"]} icon={big.report} />
      </Panel>
      <Panel width="w-[54px]">
        <BigButton width="w-[52px]" label={["Guide"]} icon={big.guide} />
      </Panel>
      <Panel width="w-[108px]">
        <BigButton width="w-[105px]" label={["Stress Analysis", "Settings"]} icon={big.settings} />
      </Panel>
      <Panel width="w-[107px]">
        <BigButton width="w-full" label={["Finish", "Stress Analysis"]} icon={big.finish} />
      </Panel>
    </section>
  );
}

/* ---------- browser tree ---------- */

type TreeNode = {
  label: string;
  icon: ReactNode;
  selected?: boolean;
  collapsed?: boolean;
  children?: TreeNode[];
};

const part = (
  <>
    <path d="M1 5 5 1h10v10l-4 4H1Z" fill="#ffd84c" stroke="#8a5200" strokeWidth="1.500" />
    <path d="M5 1h10l-4 4H1Z" fill="#fff8d8" stroke="#8a5200" />
    <path d="M11 5v10l4-4V1Z" fill="#e0a010" stroke="#8a5200" />
  </>
);

const bar = (
  <>
    <path d="M4 0h8v16H4Z" fill="url(#rainbow)" />
    <path d="M12.500 1v15" stroke="#a0a0a0" />
  </>
);

const folder = (
  <>
    <path d="M.5 2.500 2 1h5l1.500 2H15.500v12H.5Z" fill="#f7dcaa" stroke="#8a6a44" />
    <path d="M6 5h4v9H6Z" fill="url(#rainbow)" />
  </>
);

const simulation: TreeNode = {
  label: "Simulation:1",
  icon: (
    <>
      <path d="M0 16v-6h10V0h6v16Z" fill="#0818d0" />
      <path d="M3 15v-3h9V3h3v12Z" fill="#10d8e0" />
      <path d="M6 15v-2h7V6h2v9Z" fill="#f8f000" />
      <path d="M9 15h3v-4h3v4Z" fill="#f01010" />
      <path d="m0 0 6 6" stroke="#000" strokeWidth="2" />
      <path d="M9 9H3l6-6Z" fill="#000" />
    </>
  ),
  children: [
    { label: "temp_y_axis.ipt", icon: part, collapsed: true },
    {
      label: "Material",
      icon: (
        <>
          <ellipse cx="8" cy="8" rx="7" ry="3.500" stroke="#444" />
          <ellipse cx="8" cy="8" rx="7" ry="3" transform="rotate(55 8 8)" stroke="#444" />
          <circle cx="9" cy="8" r="2" fill="#778" />
          <circle cx="5" cy="2" r="1.700" fill="#e01010" />
          <circle cx="1.500" cy="8" r="1.500" fill="#e01010" />
        </>
      ),
    },
    {
      label: "Constraints",
      icon: (
        <>
          <path d="m1 8 3 3m-3 0 4 4m0-5 5 5m-2-4 4 4m0-3 3 3" stroke="#d01818" />
          <path d="M2 4 6 1h5l4 5v6h-4L7 8 2 7Z" fill="#4c8a18" stroke="#000" />
          <path d="M5 3 7 1h4l2 4H9Z" fill="#f0e020" />
        </>
      ),
      children: [
        {
          label: "Fixed Constraint:1",
          selected: true,
          icon: (
            <>
              <path d="M0 5h5l5 3-2 3-4-2H0Z" fill="#4f88b8" stroke="#123" />
              <path d="M11 5h5M13.500 5v5M11 10h5" stroke="#111" />
            </>
          ),
        },
      ],
    },
    {
      label: "Loads",
      icon: (
        <>
          <path d="m2 7 4-1 8 6-2 3H7L2 10Z" fill="#7a8a18" stroke="#111" />
          <path d="m3 8 3-1 3 3-3 1Z" fill="#20c8e0" />
          <path d="m6 10 4-1 2 2-4 2Z" fill="#f0e020" />
          <path d="m3 0 4 4" stroke="#1030e0" strokeWidth="2" />
          <path d="M9 7H4l5-5Z" fill="#1030e0" />
        </>
      ),
      children: [
        {
          label: "Gravity",
          icon: (
            <>
              <path d="M8 5c3-2 7-1 7 3s-2 7-5 7H6c-3 0-5-3-5-7s4-5 7-3Z" fill="#ffd51c" stroke="#a07000" />
              <path d="M8 5V2" stroke="#603" />
              <path d="M7 3C5 3 3 2 2 1c3-1 5 0 5 2ZM9 3c0-2 2-2 3-2 0 1-1 3-3 2Z" fill="#2c7a20" />
            </>
          ),
        },
        {
          label: "Force:1",
          icon: (
            <>
              <path d="M0 9h16v2H0Z" fill="#4f78a8" stroke="#111" />
              <path d="m8 11 4 4H4Z" fill="#fff" stroke="#111" />
              <path d="M2 0v5" stroke="#111" />
              <path d="M0 4h5L2.500 8Z" fill="#111" />
              <path d="M13.500 0v5" stroke="#e01010" />
              <path d="M11 4h5l-2.500 4Z" fill="#e01010" />
            </>
          ),
        },
      ],
    },
    {
      label: "Contacts",
      icon: (
        <>
          <path d="M1 7h10v6H1Z" fill="#a4a4a4" />
          <path d="M5.500 1.500h10v5h-10Z" fill="#f01010" stroke="#700" />
        </>
      ),
    },
    {
      label: "Mesh",
      icon: (
        <>
          <path d="M1 1h6v8h8v6H1Z" fill="#58a8d8" stroke="#103c78" />
          <path d="m1 4 6 5 6 6M7 3 2 14M1 10h6l-2 5M9 15l4-6" stroke="#183c80" />
        </>
      ),
    },
    {
      label: "Results",
      icon: bar,
      children: [
        { label: "Von Mises Stress", icon: bar },
        { label: "1st Principal Stress", icon: bar },
        { label: "3rd Principal Stress", icon: bar },
        { label: "Displacement", icon: bar },
        { label: "Safety Factor", icon: bar },
        { label: "Stress", icon: folder, collapsed: true },
        {
          label: "Displacement",
          icon: folder,
          children: [
            { label: "X Displacement", icon: bar },
            { label: "Y Displacement", icon: bar },
            { label: "Z Displacement", icon: bar },
          ],
        },
        { label: "Strain", icon: folder, collapsed: true },
      ],
    },
  ],
};

// one 19px wide column of the connector lines in front of a row
function Guide({ kind, box }: { kind: "pass" | "blank" | "tee" | "last"; box?: "+" | "-" }) {
  return (
    <svg viewBox="0 0 19 20" className="h-5 w-[19px] shrink-0 overflow-visible" fill="none" stroke="#868686">
      {kind === "pass" && <path d="M9.500 0v20" />}
      {kind === "tee" && <path d="M9.500 0v20M9.500 10.500H21" />}
      {kind === "last" && <path d="M9.500 0v10.500H21" />}
      {box && (
        <>
          <path d="M5.500 6.500h8v8h-8Z" fill="#fff" />
          <path d={box === "+" ? "M7 10.500h5M9.500 8v5" : "M7 10.500h5"} stroke="#000" />
        </>
      )}
    </svg>
  );
}

function TreeItem({ node, trail, last }: { node: TreeNode; trail: boolean[]; last: boolean }) {
  const box = node.collapsed ? "+" : node.children ? "-" : undefined;
  return (
    <li>
      <div className="flex h-5 items-center">
        {trail.map((open, i) => (
          <Guide key={i} kind={open ? "pass" : "blank"} />
        ))}
        <Guide kind={last ? "last" : "tee"} box={box} />
        <span className="ml-1.5 flex items-center gap-0.5">
          <Icon size="xs">{node.icon}</Icon>
          <span
            className={
              node.selected
                ? "border border-[#ff0000] bg-[#3399ff] leading-[14px] whitespace-nowrap text-white"
                : "border border-transparent leading-[14px] whitespace-nowrap"
            }
          >
            {node.label}
          </span>
        </span>
      </div>
      {node.children && (
        <ul>
          {node.children.map((child, i) => (
            <TreeItem key={i} node={child} trail={[...trail, !last]} last={i === node.children!.length - 1} />
          ))}
        </ul>
      )}
    </li>
  );
}

function Browser() {
  return (
    <aside className="flex w-[366px] shrink-0 flex-col bg-[#f0f0f0] pt-0.5 pr-0.5 pb-1 pl-0.5 font-['DejaVu_Sans_Condensed','DejaVu_Sans',sans-serif] text-[13px] text-black">
      <div className="flex h-[13px] items-center gap-1 pl-px">
        <span className="h-[5px] flex-1 border-y border-r border-[#a0a0a0]" />
        <button aria-label="Close browser" className="flex w-3.5 justify-center">
          <svg viewBox="0 0 7 6" className="h-1.5 w-[7px]">
            <path d="m1 0 5 6M6 0 1 6" stroke="#000" strokeWidth="1.500" />
          </svg>
        </button>
      </div>
      <div className="flex h-7 items-center justify-between bg-[#ababab] pr-1.5 pl-2">
        <button className="flex items-center gap-1 font-bold text-white">
          Stress Analysis
          <Caret light />
        </button>
        <button aria-label="Browser help" className="flex size-[18px] items-center justify-center rounded-sm border-2 border-black bg-[#fffcc8] text-sm leading-3 font-bold text-[#10107c]">
          ?
        </button>
      </div>
      <div className="min-h-0 flex-1 overflow-hidden border border-[#686868] bg-white">
        <div className="flex h-5 items-center gap-[3px] bg-[#ababab] pl-[5px]">
          <Icon size="xs">{part}</Icon>
          temp_y_axis.ipt
        </div>
        <ul className="-ml-px">
          <TreeItem node={simulation} trail={[]} last />
        </ul>
      </div>
    </aside>
  );
}

/* ---------- graphics window ---------- */

function Scene() {
  return (
    <svg viewBox="375 164 1551 929" className="absolute inset-0 size-full" fill="none">
      <defs>
        <linearGradient id="top" gradientUnits="userSpaceOnUse" x1="780" y1="400" x2="1440" y2="600">
          <stop offset="0" stopColor="#cbcbcf" />
          <stop offset="1" stopColor="#b6b6ba" />
        </linearGradient>
        <linearGradient id="side" gradientUnits="userSpaceOnUse" x1="780" y1="500" x2="1420" y2="720">
          <stop offset="0" stopColor="#747579" />
          <stop offset="0.5" stopColor="#7e7e82" />
          <stop offset="1" stopColor="#77777b" />
        </linearGradient>
        <radialGradient id="shadow">
          <stop offset="0.5" stopColor="#000" stopOpacity="0.4" />
          <stop offset="1" stopColor="#000" stopOpacity="0" />
        </radialGradient>
      </defs>
      <path d="M704 416 819 349 1519 580 1403 646Z" fill="url(#top)" />
      <path d="M704 416 1403 646 1428 790 728 560Z" fill="url(#side)" />
      <path d="M704 416 819 349 837.500 460Z" fill="#e0e0e4" />
      <path d="M704 416 837.500 460 844 494 728 560Z" fill="#ababae" />
      <path d="M1403 646 1519 580 1544 724 1428 790Z" fill="#9a9eb4" />
      <path d="M704 416 819 349 844 494 728 560ZM1403 646 1519 580 1544 724 1428 790Z" stroke="#fff" strokeWidth="2" />

      {/* view cube */}
      <ellipse cx="1867" cy="272" rx="46" ry="26" fill="url(#shadow)" />
      <path d="M1825 232 1860 217 1894 223 1859 243Z" fill="#989898" />
      <path d="M1825 232 1859 243 1866 289 1835 274Z" fill="#8c8c8c" />
      <path d="M1859 243 1894 223 1899 267 1866 289Z" fill="#8a8a8a" />
      <path d="M1825 232 1859 243 1894 223M1859 243l7 46" stroke="#6c6c6c" strokeDasharray="5 3" />
      <path d="m1852 240 7-3 7 2v9l-6 3-7-3Z" fill="#7b8088" />
      <g fill="#58595b" fontFamily="Open Sans, sans-serif" fontWeight="600" textAnchor="middle">
        <text x="1859" y="231" fontSize="8" transform="rotate(-14 1859 228)">TOP</text>
        <text x="1845" y="263" fontSize="8" transform="rotate(18 1845 260)">LEFT</text>
        <text x="1880" y="260" fontSize="9" transform="rotate(-32 1880 256)">FRONT</text>
      </g>

      {/* origin triad */}
      <path d="M427 1041 425 1026" stroke="#10b010" />
      <path d="m427 1041 12-7" stroke="#b01010" />
      <path d="m427 1041 12 4" stroke="#1010c0" />
      <path d="m423 1016 7 7-2 3h-9Z" fill="#0c8c10" />
      <path d="m438 1029 5-1 5 2-4 8-5-3Z" fill="#a00404" />
      <path d="m437 1045 5-4 5 5-4 5-5-1Z" fill="#0404b4" />
      <g fontFamily="Open Sans, sans-serif" fontSize="12" textAnchor="middle">
        <text x="422" y="1014" fill="#30e030">Y</text>
        <text x="453" y="1031" fill="#f03030">X</text>
        <text x="452" y="1054" fill="#2828f0">Z</text>
      </g>
    </svg>
  );
}

function NavBar() {
  return (
    <div className="absolute top-36 right-0.5 flex w-[34px] flex-col items-center rounded-md border-2 border-[#383838] bg-[#808080] py-0.5 text-[#555]">
      <button aria-label="Close navigation bar" className="mr-0.5 flex size-2 items-center justify-center self-end rounded-full bg-[#4c4c4c]">
        <svg viewBox="0 0 6 6" className="size-1.5">
          <path d="m1 1 4 4m0-4L1 5" stroke="#c4c4c4" />
        </svg>
      </button>
      <button aria-label="Steering wheel" className="mt-[11px]">
        <svg viewBox="0 0 22 22" className="size-[22px]">
          <path d="M11 1h10v10A10 10 0 1 1 11 1Z" fill="#c0c1c3" stroke="#555" />
          <circle cx="11" cy="11" r="6" fill="#acadaf" stroke="#555" />
          <path d="m7 15-4 4M15 15l4 4" stroke="#555" />
        </svg>
      </button>
      <span className="mt-2 flex h-[5px] opacity-50">
        <Caret />
      </span>
      <span className="mt-1 h-px w-[26px] bg-[#555]" />
      <button aria-label="Pan" className="mt-1.5">
        <svg viewBox="0 0 16 16" className="size-4">
          <path d="M5 15 1 8l1-1 3 2-2-6 1-1 3 5V1h2v6l2-5 1 1-1 5 3-3 1 1-4 7-1 2Z" fill="#d4d4d4" stroke="#555" strokeWidth=".7" />
        </svg>
      </button>
      <button aria-label="Zoom" className="mt-2">
        <svg viewBox="0 0 16 16" className="size-4">
          <path d="m10 10 5 5" stroke="#505050" strokeWidth="3" />
          <circle cx="7" cy="6.500" r="6" fill="#b8c0bc" stroke="#555" />
          <path d="M4 4h6v5H4Z" fill="#ccc" stroke="#444" />
        </svg>
      </button>
      <span className="mt-2 flex h-[5px] opacity-50">
        <Caret />
      </span>
      <button aria-label="Orbit" className="mt-1.5">
        <svg viewBox="0 0 16 16" className="size-4" fill="none" stroke="#555" strokeWidth="1.200">
          <ellipse cx="8" cy="8" rx="7.500" ry="3.500" />
          <ellipse cx="7" cy="8" rx="3" ry="7.500" />
          <path d="M7 6v4M5 8h4M12 3v3" />
        </svg>
      </button>
      <span className="mt-2 flex h-[5px] opacity-50">
        <Caret />
      </span>
      <button aria-label="Look at" className="mt-1.5">
        <svg viewBox="0 0 16 16" className="size-4">
          <path d="M1 6h14v9H1Z" fill="#b4b4b4" stroke="#444" />
          <path d="M4 9h8v3H4ZM3 5l8-3v3" fill="none" stroke="#444" />
        </svg>
      </button>
      <button aria-label="Customize navigation bar" className="mt-2 mr-0.5 flex size-2 items-center justify-center self-end rounded-full bg-[#4c4c4c]">
        <span className="h-px w-1 bg-[#c4c4c4]" />
      </button>
    </div>
  );
}

const documents = [
  { name: "My Home", width: "w-[90px]" },
  { name: "Z_axis_v02.iam", width: "w-[121px]" },
  { name: "YZ_plate.ipt", width: "w-[102px]" },
  { name: "temp_y_axis.ipt", width: "w-[139px]", active: true },
  { name: "Z_plate.ipt", width: "w-[93px]" },
  { name: "Assembly2", width: "w-[95px]" },
];

function DocumentTabs() {
  return (
    <div className="flex h-7 shrink-0 items-start border-t-2 border-b border-t-[#686868] border-b-black bg-linear-to-b from-[#d4d4d4] to-[#a8a8a8] text-sm text-[#1c1c1c]">
      <div className="flex h-full shrink-0 gap-px bg-[#404040] pr-px">
        <button aria-label="Cascade" className="flex w-6 items-center justify-center bg-[#e0e0e4]">
          <svg viewBox="0 0 20 20" className="size-5" stroke="#4c5056" fill="#f4f4f6">
            <path d="M1 2h13v9H1ZM3 6h13v9H3ZM6 10h13v8H6Z" />
            <path d="M1 3h13M3 7h13M6 11h13" strokeWidth="2" />
          </svg>
        </button>
        <button aria-label="Arrange" className="flex w-6 items-center justify-center bg-[#e0e0e4]">
          <svg viewBox="0 0 20 20" className="size-5" stroke="#4c5056" strokeWidth="1.500" fill="#f4f4f6">
            <path d="M1 2h7v6H1ZM12 2h7v6h-7ZM1 12h7v6H1ZM12 12h7v6h-7Z" />
          </svg>
        </button>
        <button aria-label="Document list" className="flex w-[23px] justify-center bg-[#e0e0e4] pt-1">
          <svg viewBox="0 0 11 6" className="h-1.5 w-[11px]">
            <path d="M0 6h11L5.500 0Z" fill="#333" />
          </svg>
        </button>
      </div>
      {documents.map((doc) => (
        <button
          key={doc.name}
          className={`h-[22px] shrink-0 bg-[#4c4c4c] px-px pb-px [clip-path:polygon(0_0,100%_0,100%_16px,calc(100%-6px)_100%,6px_100%,0_16px)] ${doc.width}`}
        >
          <span
            className={`flex h-full items-center gap-2 pl-2.5 leading-5 whitespace-nowrap [clip-path:polygon(0_0,100%_0,100%_16px,calc(100%-6px)_100%,6px_100%,0_16px)] ${
              doc.active ? "bg-white" : "bg-linear-to-b from-[#dcdcdc] to-[#c0c0c0]"
            }`}
          >
            {doc.name}
            {doc.active && (
              <svg viewBox="0 0 9 10" className="mb-1.5 h-2.5 w-[9px]" fill="#fff" stroke="#808080">
                <path d="M1 1h2l1.500 2L6 1h2v2L6.500 5 8 7v2H6L4.500 7 3 9H1V7l1.500-2L1 3Z" />
              </svg>
            )}
          </span>
        </button>
      ))}
    </div>
  );
}

function Viewport() {
  return (
    <main className="flex min-w-0 flex-1 flex-col border-l-2 border-[#8a8a8a] bg-[#f4f4f4]">
      <div className="relative mr-px mb-0.5 min-h-0 flex-1 bg-linear-to-b from-[#2e2e2e] to-[#a4a4a4]">
        <Scene />
        <div className="absolute top-1.5 right-1 flex h-3 items-center gap-2">
          <button aria-label="Minimize document" className="flex w-3 pt-1.5">
            <span className="h-[3px] w-3 bg-white" />
          </button>
          <button aria-label="Restore document">
            <svg viewBox="0 0 11 11" className="size-[11px]" fill="none" stroke="#fff" strokeWidth="1.500">
              <path d="M1 4h6v6H1ZM3 3V1h7v7H8" />
            </svg>
          </button>
          <button aria-label="Close document">
            <svg viewBox="0 0 10 10" className="size-2.5">
              <path d="m1 1 8 8m0-8L1 9" stroke="#fff" strokeWidth="2.500" />
            </svg>
          </button>
        </div>
        <NavBar />
      </div>
      <DocumentTabs />
    </main>
  );
}

export default function App() {
  return (
    <div className="flex h-screen overflow-hidden bg-[#f0f0f0] font-['Open_Sans','Noto_Sans',sans-serif]">
      <Defs />
      <div className="flex w-1.5 shrink-0 flex-col">
        <span className="h-[60px] bg-[#1c1c1c]" />
        <span className="flex-1" />
        <span className="h-[300px] w-1 border-y border-r border-[#9c9c9c] bg-[#b8b8b8]" />
        <span className="h-[92px]" />
        <span className="h-[141px] bg-black" />
      </div>
      <div className="flex min-w-0 flex-1 flex-col">
        <Header />
        <Ribbon />
        <div className="flex min-h-0 flex-1">
          <Browser />
          <Viewport />
        </div>
        <footer className="flex h-[17px] shrink-0 justify-between overflow-hidden bg-linear-to-b from-white to-[#d0d0d0] text-sm leading-7 text-[#222]">
          <span className="pl-px">Ready</span>
          <div className="flex">
            <span className="w-10 border-l border-[#c4c4c4] pl-2.5">1</span>
            <span className="w-[38px] border-l border-[#c4c4c4] pl-2">18</span>
          </div>
        </footer>
      </div>
    </div>
  );
}
